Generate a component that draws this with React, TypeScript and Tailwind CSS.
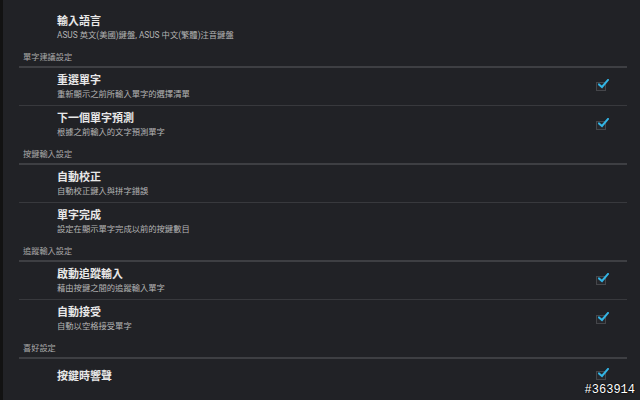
const font = { fontFamily: 'Roboto, "Noto Sans CJK TC", sans-serif' };

type Row =
  | { kind: "header"; label: string }
  | { kind: "item"; title: string; sub?: string; checked?: boolean; divider?: boolean };

const rows: Row[] = [
  { kind: "header", label: "單字建議設定" },
  { kind: "item", title: "重選單字", sub: "重新顯示之前所輸入單字的選擇清單", checked: true, divider: true },
  { kind: "item", title: "下一個單字預測", sub: "根據之前輸入的文字預測單字", checked: true },
  { kind: "header", label: "按鍵輸入設定" },
  { kind: "item", title: "自動校正", sub: "自動校正鍵入與拼字錯誤", divider: true },
  { kind: "item", title: "單字完成", sub: "設定在顯示單字完成以前的按鍵數目" },
  { kind: "header", label: "追蹤輸入設定" },
  { kind: "item", title: "啟動追蹤輸入", sub: "藉由按鍵之間的追蹤輸入單字", checked: true, divider: true },
  { kind: "item", title: "自動接受", sub: "自動以空格接受單字", checked: true },
  { kind: "header", label: "喜好設定" },
];

function Check() {
  return (
    <div className="relative w-[10px] h-[9px] border border-[#45464a] bg-[#26272b]">
      <svg className="absolute -top-[4px] left-[1px]" width="11" height="10" viewBox="0 0 11 10">
        <path d="M1 5.5 L4 8 L10 1" fill="none" stroke="#33b5e5" strokeWidth="2" strokeLinecap="square" />
      </svg>
    </div>
  );
}

export default function App() {
  return (
    <div className="w-[640px] h-[400px] flex bg-[#212226] overflow-hidden relative" style={font}>
      <div className="w-[3px] bg-[#121212]" />
      <div className="flex-1 flex flex-col pl-[16px] pr-[13px]">
        <div className="h-[47px] shrink-0 pl-[38px] pt-[15px] flex flex-col">
          <span className="text-[11px] leading-[14px] font-bold text-[#e8e8e8]">輸入語言</span>
          <span className="text-[8.3px] leading-[12px] text-[#b4b4b4]">
            ASUS 英文(美國)鍵盤, ASUS 中文(繁體)注音鍵盤
          </span>
        </div>
        {rows.map((r, i) =>
          r.kind === "header" ? (
            <div key={i} className="h-[21px] shrink-0 flex items-center pl-[4px] pt-[1px] border-b-2 border-[#3e3f43]">
              <span className="text-[8.2px] leading-[12px] text-[#a9a9a9]">{r.label}</span>
            </div>
          ) : (
            <div
              key={i}
              className={`h-[38px] shrink-0 flex items-center pl-[38px] pr-[21px] ${r.divider ? "border-b border-[#38393d]" : ""}`}
            >
              <div className="flex-1 flex flex-col">
                <span className="text-[11px] leading-[14px] font-bold text-[#e8e8e8]">{r.title}</span>
                <span className="text-[8.3px] leading-[12px] text-[#b4b4b4]">{r.sub}</span>
              </div>
              {r.checked && <Check />}
            </div>
          )
        )}
        <div className="h-[40px] shrink-0 flex items-start pt-[11px] pl-[38px] pr-[21px]">
          <span className="flex-1 text-[11px] leading-[14px] font-bold text-[#e8e8e8]">按鍵時響聲</span>
          <div className="mt-[1px]">
            <Check />
          </div>
        </div>
      </div>
      <span
        className="absolute right-[5px] bottom-[1px] text-[12px] text-white"
        style={{ fontFamily: '"Liberation Mono", monospace', textShadow: "0 0 2px #000, 0 0 1px #000" }}
      >
        #363914
      </span>
    </div>
  );
}
